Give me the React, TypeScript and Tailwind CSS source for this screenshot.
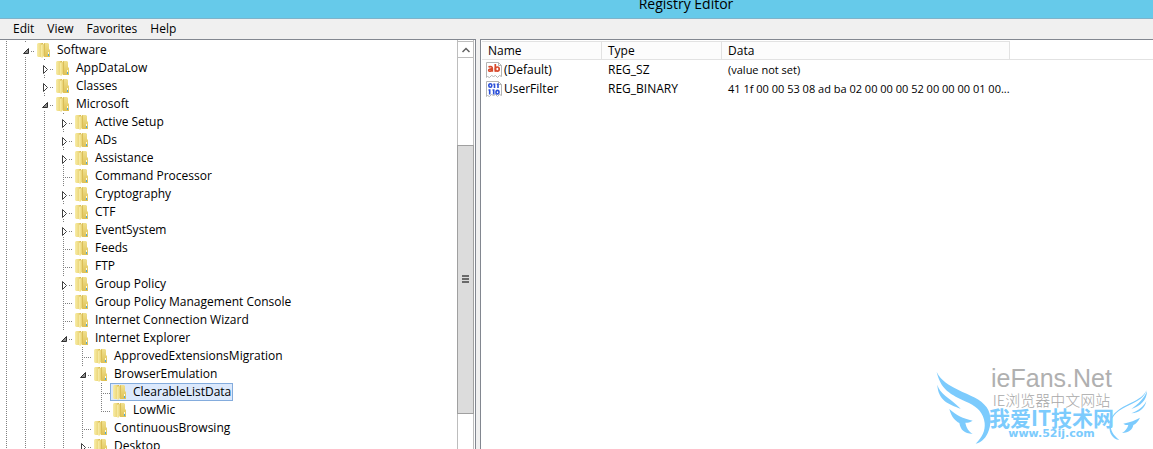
import React, { useState } from 'react';

type Branch = 'open' | 'closed' | 'leaf' | 'last';

type Key = { name: string; depth: number; branch: Branch };

const keys: Key[] = [
  { name: 'Software', depth: 1, branch: 'open' },
  { name: 'AppDataLow', depth: 2, branch: 'closed' },
  { name: 'Classes', depth: 2, branch: 'closed' },
  { name: 'Microsoft', depth: 2, branch: 'open' },
  { name: 'Active Setup', depth: 3, branch: 'closed' },
  { name: 'ADs', depth: 3, branch: 'closed' },
  { name: 'Assistance', depth: 3, branch: 'closed' },
  { name: 'Command Processor', depth: 3, branch: 'leaf' },
  { name: 'Cryptography', depth: 3, branch: 'closed' },
  { name: 'CTF', depth: 3, branch: 'closed' },
  { name: 'EventSystem', depth: 3, branch: 'closed' },
  { name: 'Feeds', depth: 3, branch: 'leaf' },
  { name: 'FTP', depth: 3, branch: 'leaf' },
  { name: 'Group Policy', depth: 3, branch: 'closed' },
  { name: 'Group Policy Management Console', depth: 3, branch: 'leaf' },
  { name: 'Internet Connection Wizard', depth: 3, branch: 'leaf' },
  { name: 'Internet Explorer', depth: 3, branch: 'open' },
  { name: 'ApprovedExtensionsMigration', depth: 4, branch: 'leaf' },
  { name: 'BrowserEmulation', depth: 4, branch: 'open' },
  { name: 'ClearableListData', depth: 5, branch: 'leaf' },
  { name: 'LowMic', depth: 5, branch: 'last' },
  { name: 'ContinuousBrowsing', depth: 4, branch: 'leaf' },
  { name: 'Desktop', depth: 4, branch: 'closed' },
];

const values = [
  { name: '(Default)', type: 'REG_SZ', data: '(value not set)', binary: false },
  { name: 'UserFilter', type: 'REG_BINARY', data: '41 1f 00 00 53 08 ad ba 02 00 00 00 52 00 00 00 01 00...', binary: true },
];

function FolderIcon() {
  return (
    <svg className="h-4 w-4 shrink-0" viewBox="0 0 16 16" aria-hidden="true">
      <defs>
        <linearGradient id="folder-back" x1="0" x2="0" y1="0" y2="1">
          <stop offset="0" stopColor="#f0e08e" />
          <stop offset="1" stopColor="#dfc255" />
        </linearGradient>
        <linearGradient id="folder-flap" x1="0" x2="1" y1="0" y2="0">
          <stop offset="0" stopColor="#f8eda9" />
          <stop offset="0.6" stopColor="#edd97f" />
          <stop offset="1" stopColor="#d2b145" />
        </linearGradient>
      </defs>
      <path d="M8 1h4l1 1v5l1 1v7H8z" fill="url(#folder-back)" />
      <path d="M1 2l1-1h5v14H2l-1-1z" fill="url(#folder-flap)" />
      <path d="M5 3l4-2v12l-3 3-1-1z" fill="url(#folder-flap)" />
      <path d="M12 10h1v2h-1z" fill="#fffbe0" />
      <path d="M12 12h1v2h-1z" fill="#4aa8e0" />
    </svg>
  );
}

// lines and expander arrow in front of a folder
function BranchMark({ branch }: { branch: Branch }) {
  const line = { stroke: '#808080', strokeDasharray: '1 1', fill: 'none' };
  const expandable = branch === 'open' || branch === 'closed';
  return (
    <svg className="h-[18px] w-[15px] shrink-0" viewBox="0 0 15 18" aria-hidden="true">
      {branch === 'leaf' && <path d="M6.5 0v18" {...line} />}
      {branch === 'last' && <path d="M6.5 0v11" {...line} />}
      {expandable ? <path d="M6.5 0v2M6.5 16v2M12 10.5h3" {...line} /> : <path d="M8 10.5h7" {...line} />}
      {branch === 'closed' && <path d="M5.5 6.5v8l4-4z" fill="#fff" stroke="#404040" />}
      {branch === 'open' && <path d="M9.5 7.5v5h-5z" fill="#8c8c8c" stroke="#303030" />}
    </svg>
  );
}

function ValueIcon({ binary }: { binary: boolean }) {
  return (
    <svg className="h-4 w-4 shrink-0" viewBox="0 0 16 16" aria-hidden="true">
      <path d="M.5.5h12l3 3v11l-2-1-2 2-2-2-2 1-2-1-2 2-2-1-1 1z" fill="#fff" stroke="#b4b4b4" />
      <path d="M12.5.5v3h3" fill="none" stroke="#b4b4b4" />
      {binary ? (
        <g fill="none" stroke="#2b4fd8" strokeWidth="1.6">
          <ellipse cx="4.300" cy="4.500" rx="1.500" ry="1.800" />
          <path d="M7.300 3.200h1.200v3.900M10.800 3.200h1.200v3.900" />
          <path d="M2.500 9h1.200v4.500M6.500 9h1.200v4.500" />
          <ellipse cx="11.500" cy="11.200" rx="1.500" ry="1.800" />
        </g>
      ) : (
        <g fill="none" stroke="#d8492b" strokeWidth="1.7">
          <path d="M2.500 4.900c3-.8 3.800 0 3.800 1.600v3.300M6.300 7C4 6.800 2.600 7.300 2.700 8.400c.2 1.300 2.800 1 3.600-.4" />
          <path d="M9.300 2v7.800" />
          <ellipse cx="11.300" cy="7.100" rx="1.900" ry="2.100" />
        </g>
      )}
    </svg>
  );
}

function Watermark() {
  return (
    <div className="pointer-events-none absolute right-0 bottom-0 flex h-[84px] w-[221px] flex-col items-center pl-[18px] whitespace-nowrap">
      <svg className="absolute inset-0 h-full w-full" viewBox="0 0 663 252" fill="#7ccbfd" aria-hidden="true">
        <path d="M14 21C28 48 50 60 78 74c36 18 68 27 86 53 16 24 14 54 3 78-8 17-21 29-36 31 20-20 29-39 27-62-3-29-20-46-47-60C66 92 28 82 14 21z" />
        <path d="M16 59c8 28 32 35 70 72-37-13-68-26-70-72z" />
        <path d="M52 132c22 20 40 28 70 35-8 5-14 6-22 6 3 15 9 25 22 34-26-2-36-12-40-33-12-6-24-18-30-42z" />
        <path d="M644 75c-8 23-24 32-50 44-34 16-56 31-58 58-1 18 6 32 26 48-21-3-30-20-30-42 1-32 24-49 52-63 29-14 48-22 60-45z" />
        <path d="M645 78c0 28-20 45-47 54 22-16 38-32 47-54z" />
        <path d="M643 108c-4 23-22 35-45 37 21-9 36-19 45-37z" />
        <path d="M624 158c-14 8-29 13-50 18 5 4 9 4 15 4-3 11-9 18-19 24 22-2 31-9 34-24 8-4 15-11 20-22z" />
      </svg>
      <p className="font-[Liberation_Sans,sans-serif] text-[25px] leading-[26px] text-[#b0b0b0]">ieFans.Net</p>
      <p className="font-[Noto_Sans_CJK_SC,sans-serif] text-[15px] leading-[18px] font-light text-[#a8a8a8]">IE浏览器中文网站</p>
      <p className="relative font-[Noto_Sans_CJK_SC,sans-serif] text-[21px] leading-[16px] font-bold text-[#7ccbfd]">我爱IT技术网</p>
      <p className="relative font-[DejaVu_Sans,sans-serif] text-[11px] leading-[18px] font-bold text-[#7ccbfd]">www.52ij.com</p>
    </div>
  );
}

export default function App() {
  const [selected, setSelected] = useState('ClearableListData');

  return (
    <div className="relative flex h-screen flex-col overflow-hidden bg-[#f0f0f0] font-[Open_Sans,Noto_Sans,sans-serif] text-[12px] text-black">
      <header className="h-[19px] shrink-0 overflow-hidden border-b border-[#7fb3ca] bg-[#66caea] pl-[219px] text-center">
        <h1 className="text-[14px] leading-[8px]">Registry Editor</h1>
      </header>

      <nav className="flex h-5 shrink-0 items-center gap-[13px] px-[13px]">
        {['Edit', 'View', 'Favorites', 'Help'].map((item) => (
          <button key={item} type="button" className="leading-5">{item}</button>
        ))}
      </nav>

      <main className="flex min-h-0 flex-1">
        <section className="flex w-[476px] shrink-0 border-t border-r border-[#828790] bg-white">
          <ul className="min-w-0 flex-1 overflow-hidden pt-px">
            {keys.map((key) => (
              <li key={key.name} className="flex h-[18px]">
                {Array.from({ length: key.depth }, (_, i) => (
                  <span key={i} className="w-[19px] shrink-0 pl-[6px]">
                    <span className="block h-full w-px bg-[repeating-linear-gradient(to_bottom,#808080_0_1px,transparent_1px_2px)]" />
                  </span>
                ))}
                <BranchMark branch={key.branch} />
                <button
                  type="button"
                  onClick={() => setSelected(key.name)}
                  className={`flex items-center gap-[5px] border pr-px pl-px leading-4 whitespace-nowrap ${
                    selected === key.name ? 'border-[#84acdd] bg-[#dce9fc]' : 'border-transparent'
                  }`}
                >
                  <FolderIcon />
                  {key.name}
                </button>
              </li>
            ))}
          </ul>

          <div className="mr-px flex w-[17px] shrink-0 flex-col border-x border-[#bdbdbd] pt-px">
            <button type="button" aria-label="Scroll up" className="flex h-[17px] shrink-0 items-center justify-center border-y border-[#bdbdbd]">
              <svg className="h-2 w-2" viewBox="0 0 8 8" fill="none" stroke="#606060" strokeWidth="1.5" aria-hidden="true">
                <path d="M.5 6L4 2.500 7.500 6" />
              </svg>
            </button>
            <div className="flex-[87]" />
            <div className="-mx-px flex flex-[268] flex-col items-center justify-center gap-px border border-[#a0a0a0] bg-[#dcdcdc]">
              <span className="h-[2px] w-[7px] bg-[#6a6a6a]" />
              <span className="h-[2px] w-[7px] bg-[#6a6a6a]" />
              <span className="h-[2px] w-[7px] bg-[#6a6a6a]" />
            </div>
            <div className="flex-[35]" />
          </div>
        </section>

        <section className="ml-1 min-w-0 flex-1 border-t border-l border-[#828790] bg-white pt-px pl-px">
          <table className="w-full table-fixed border-separate border-spacing-0 text-left">
            <colgroup>
              <col className="w-[120px]" />
              <col className="w-[120px]" />
              <col className="w-[288px]" />
              <col />
            </colgroup>
            <thead>
              <tr className="h-[19px]">
                {['Name', 'Type', 'Data'].map((head) => (
                  <th key={head} className="border-t border-r border-b border-[#e2e2e2] bg-[#fcfcfc] py-0 pl-[6px] leading-[17px] font-normal">{head}</th>
                ))}
                <td className="border-b border-[#e2e2e2]" />
              </tr>
            </thead>
            <tbody>
              {values.map((v) => (
                <tr key={v.name} className="h-[19px]">
                  <td className="p-0 pl-1">
                    <span className="flex items-center gap-[2px] leading-[19px]">
                      <ValueIcon binary={v.binary} />
                      {v.name}
                    </span>
                  </td>
                  <td className="p-0 pl-[6px] leading-[19px]">{v.type}</td>
                  <td className="p-0 pl-[6px] text-[11px] leading-[19px] whitespace-nowrap">{v.data}</td>
                </tr>
              ))}
            </tbody>
          </table>
        </section>
      </main>

      <Watermark />
    </div>
  );
}
